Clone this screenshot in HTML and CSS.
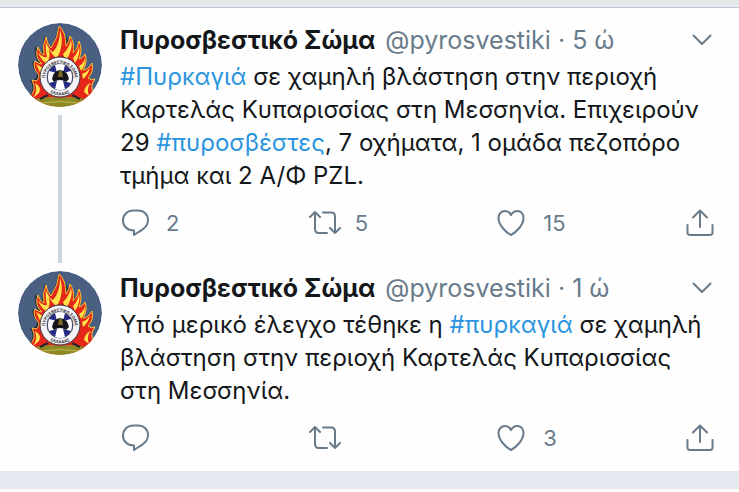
FILE: index.html
```
<!DOCTYPE html>
<html lang="el">
<head>
    <meta charset="UTF-8">
    <meta name="viewport" content="width=device-width, initial-scale=1.0">
    <title>Πυροσβεστικό Σώμα</title>
    <link rel="stylesheet" href="styles.css">
</head>
<body>

<!-- Shared icons -->
<svg class="sprite" aria-hidden="true">
    <symbol id="emblem" viewBox="0 0 84 84">
        <circle cx="42" cy="42" r="42" fill="#4a6082"/>
        <path fill="#2b2f45" d="M10 74 Q18 66 12 57 Q19 58 19 50 Q13 44 15 38 L22 42 Q15 33 17 23 Q21 29 24 31 Q25 22 26 13 Q31 20 32 25 Q39 15 40 2 L60 30 L66 66 L42 80 Z"/>
        <path fill="#e5261b" stroke="#f9c62f" stroke-width="1" d="M10 75 Q20 68 14 57 Q21 60 21 52 Q14 44 17 38 Q21 41 24 41 Q16 34 20 24 Q22 31 26 32 Q24 22 28 14 Q29 21 33 25 Q40 15 41 3 Q48 9 48 23 Q51 20 52 13 Q57 20 55 30 Q60 26 61 18 Q65 27 61 36 Q65 35 67 31 Q70 39 65 47 Q70 47 74 40 Q76 49 70 55 Q74 58 77 56 Q71 64 76 70 L72 80 L42 84 L16 82 Z"/>
        <path fill="#ffe14a" d="M29 34 Q27 25 28 19 Q31 27 35 29 Q42 21 42 7 Q45 15 43 25 Q41 33 38 35 Q34 32 31 26 Q33 36 28 40 Q22 36 20 29 Q24 35 29 34 Z M45 31 Q51 25 53 17 Q55 24 51 32 L48 38 Z M55 35 Q60 30 61 23 Q63 31 57 40 Z M61 43 Q66 40 67 35 Q68 42 63 48 Z M18 41 L25 45 L23 52 Q20 45 18 41 Z M17 60 Q24 64 21 70 L15 75 Q20 68 17 60 Z M72 45 Q70 52 65 56 L64 51 Q69 49 72 45 Z M73 60 Q68 65 71 73 L66 69 Q67 62 73 60 Z"/>
        <path fill="#8c8a24" d="M14 77 Q28 72 42 75 Q57 72 70 77 Q58 84 42 84 Q26 84 14 77 Z"/>
        <circle cx="42" cy="54" r="20" fill="#f4f3f6" stroke="#38343c" stroke-width="1"/>
        <circle cx="42" cy="54" r="13" fill="#272a86" stroke="#55555f" stroke-width="1"/>
        <path fill="#fff" d="M37 42 Q42 40 47 42 L45 50 L53 48 Q55 54 53 60 L45 58 L47 66 Q42 68 37 66 L39 58 L31 60 Q29 54 31 48 L39 50 Z"/>
        <path fill="#17151a" d="M34 56 Q35 48 42 47 Q50 48 51 56 L48 59 Q42 55 36 59 Z"/>
        <path fill="#7d672a" d="M41 48 h3 l1 6 h-5 Z"/>
        <path fill="none" stroke="#2a272b" stroke-width="2" d="M22 76 L30 72 M54 72 L62 76"/>
        <path id="ring-top" fill="none" d="M28 61 A15 15 0 1 1 56 61"/>
        <path id="ring-bottom" fill="none" d="M27 65 A19 19 0 0 0 57 65"/>
        <text class="emblem-text"><textPath href="#ring-top" startOffset="50%">ΠΥΡΟΣΒΕΣΤΙΚΟ ΣΩΜΑ</textPath></text>
        <text class="emblem-text"><textPath href="#ring-bottom" startOffset="50%">ΕΛΛΑΔΑΣ</textPath></text>
        <path fill="none" stroke="#c3b54a" stroke-width="1" d="M24 80 Q42 77 60 80"/>
    </symbol>
    <symbol id="reply" viewBox="0 0 32 30">
        <path d="M14 22.500 C7 22.500 3 18 3 12.500 C3 6.500 7.500 2.500 13.500 2.500 H18 C24 2.500 28 6.500 28 12 C28 16.500 25.500 19.500 22 21.800 L14 27 Z"/>
    </symbol>
    <symbol id="retweet" viewBox="0 0 32 30">
        <path d="M1 9 L6 4 L11 9 M6 4 V21 Q6 25 10 25 H18 M14 4.500 H22 Q26 4.500 26 8.500 V25 M21 20 L26 25 L31 20"/>
    </symbol>
    <symbol id="heart" viewBox="0 0 32 30">
        <path d="M14 27 C8.500 24 1.500 17 1.500 10 C1.500 6 4.300 3 8 3 C10.800 3 12.800 4.500 14 7.200 C15.200 4.500 17.500 3 20.300 3 C24 3 26.500 6 26.500 10 C26.500 17 19.500 24 14 27 Z"/>
    </symbol>
    <symbol id="share" viewBox="0 0 28 30">
        <path d="M1.500 17 V24.500 Q1.500 27 4 27 H24 Q26.500 27 26.500 24.500 V17 M14 19 V2.500 M7 9.500 L14 2.500 L21 9.500"/>
    </symbol>
    <symbol id="chevron" viewBox="0 0 24 14">
        <path d="M3.500 2.500 L12 11 L20.500 2.500"/>
    </symbol>
</svg>

<div class="top-bar"></div>

<main class="thread">
    <article class="tweet has-reply">
        <div class="avatar-column">
            <svg class="avatar" role="img" aria-label="Πυροσβεστικό Σώμα"><use href="#emblem"/></svg>
            <div class="thread-line"></div>
        </div>
        <div class="tweet-body">
            <header class="tweet-header">
                <span class="name">Πυροσβεστικό Σώμα</span>
                <span class="meta">@pyrosvestiki · 5 ώ</span>
                <button class="more" aria-label="Περισσότερα"><svg><use href="#chevron"/></svg></button>
            </header>
            <p class="tweet-text"><a href="#">#Πυρκαγιά</a> σε χαμηλή βλάστηση στην περιοχή Καρτελάς Κυπαρισσίας στη Μεσσηνία. Επιχειρούν 29 <a href="#">#πυροσβέστες</a>, 7 οχήματα, 1 ομάδα πεζοπόρο τμήμα και 2 Α/Φ PZL.</p>
            <div class="actions">
                <button aria-label="Απάντηση"><svg><use href="#reply"/></svg>2</button>
                <button aria-label="Retweet"><svg><use href="#retweet"/></svg>5</button>
                <button aria-label="Μου αρέσει"><svg><use href="#heart"/></svg>15</button>
                <button class="share" aria-label="Κοινοποίηση"><svg><use href="#share"/></svg></button>
            </div>
        </div>
    </article>

    <article class="tweet">
        <div class="avatar-column">
            <svg class="avatar" role="img" aria-label="Πυροσβεστικό Σώμα"><use href="#emblem"/></svg>
        </div>
        <div class="tweet-body">
            <header class="tweet-header">
                <span class="name">Πυροσβεστικό Σώμα</span>
                <span class="meta">@pyrosvestiki · 1 ώ</span>
                <button class="more" aria-label="Περισσότερα"><svg><use href="#chevron"/></svg></button>
            </header>
            <p class="tweet-text">Υπό μερικό έλεγχο τέθηκε η <a href="#">#πυρκαγιά</a> σε χαμηλή βλάστηση στην περιοχή Καρτελάς Κυπαρισσίας στη Μεσσηνία.</p>
            <div class="actions">
                <button aria-label="Απάντηση"><svg><use href="#reply"/></svg></button>
                <button aria-label="Retweet"><svg><use href="#retweet"/></svg></button>
                <button aria-label="Μου αρέσει"><svg><use href="#heart"/></svg>3</button>
                <button class="share" aria-label="Κοινοποίηση"><svg><use href="#share"/></svg></button>
            </div>
        </div>
    </article>
</main>

<div class="divider"></div>

</body>
</html>
```
FILE: styles.css
```
* {
    box-sizing: border-box;
}

body {
    margin: 0;
    font-family: Inter, "Liberation Sans", sans-serif;
    font-size: 24px;
    line-height: 33px;
    color: #14171a;
    background-color: #fefefe;
}

.sprite {
    position: absolute;
    width: 0;
    height: 0;
}

.emblem-text {
    font-size: 4px;
    font-weight: bold;
    text-anchor: middle;
    fill: #29272e;
}

.top-bar {
    height: 8px;
    background-color: #e7eae9;
    border-bottom: 1px solid #bcc8d8;
}

.thread {
    padding: 15px 25px 17px 18px;
}

.tweet {
    display: flex;
    gap: 18px;
}

.tweet + .tweet {
    margin-top: 8px;
}

.avatar-column {
    display: flex;
    flex-direction: column;
    align-items: center;
    gap: 8px;
}

.avatar {
    width: 84px;
    height: 84px;
    border-radius: 50%;
}

.thread-line {
    flex: 1;
    width: 4px;
    background-color: #ccd6dd;
}

.tweet-body {
    flex: 1;
    min-width: 0;
}

.has-reply .tweet-body {
    padding-bottom: 24px;
}

.tweet-header {
    display: flex;
    align-items: center;
    gap: 10px;
    height: 34px;
    font-size: 25px;
    white-space: nowrap;
}

.name {
    font-weight: bold;
}

.meta {
    color: #697b8a;
}

button {
    padding: 0;
    border: none;
    background: none;
    font: inherit;
    color: #697b8a;
    cursor: pointer;
}

button svg {
    fill: none;
    stroke: currentColor;
    stroke-width: 2;
    stroke-linecap: round;
    stroke-linejoin: round;
}

.more {
    display: flex;
    margin-left: auto;
}

.more svg {
    width: 24px;
    height: 14px;
}

.tweet-text {
    margin: 3px 0 15px;
}

a {
    color: #2b95e0;
    text-decoration: none;
}

.actions {
    display: grid;
    grid-template-columns: 1fr 1fr 1fr auto;
}

.actions button {
    display: flex;
    align-items: center;
    gap: 14px;
    height: 32px;
    font-size: 22px;
}

.actions svg {
    width: 32px;
    height: 30px;
}

.actions .share svg {
    width: 28px;
}

.divider {
    height: 18px;
    background-color: #e6e9f0;
}
```
